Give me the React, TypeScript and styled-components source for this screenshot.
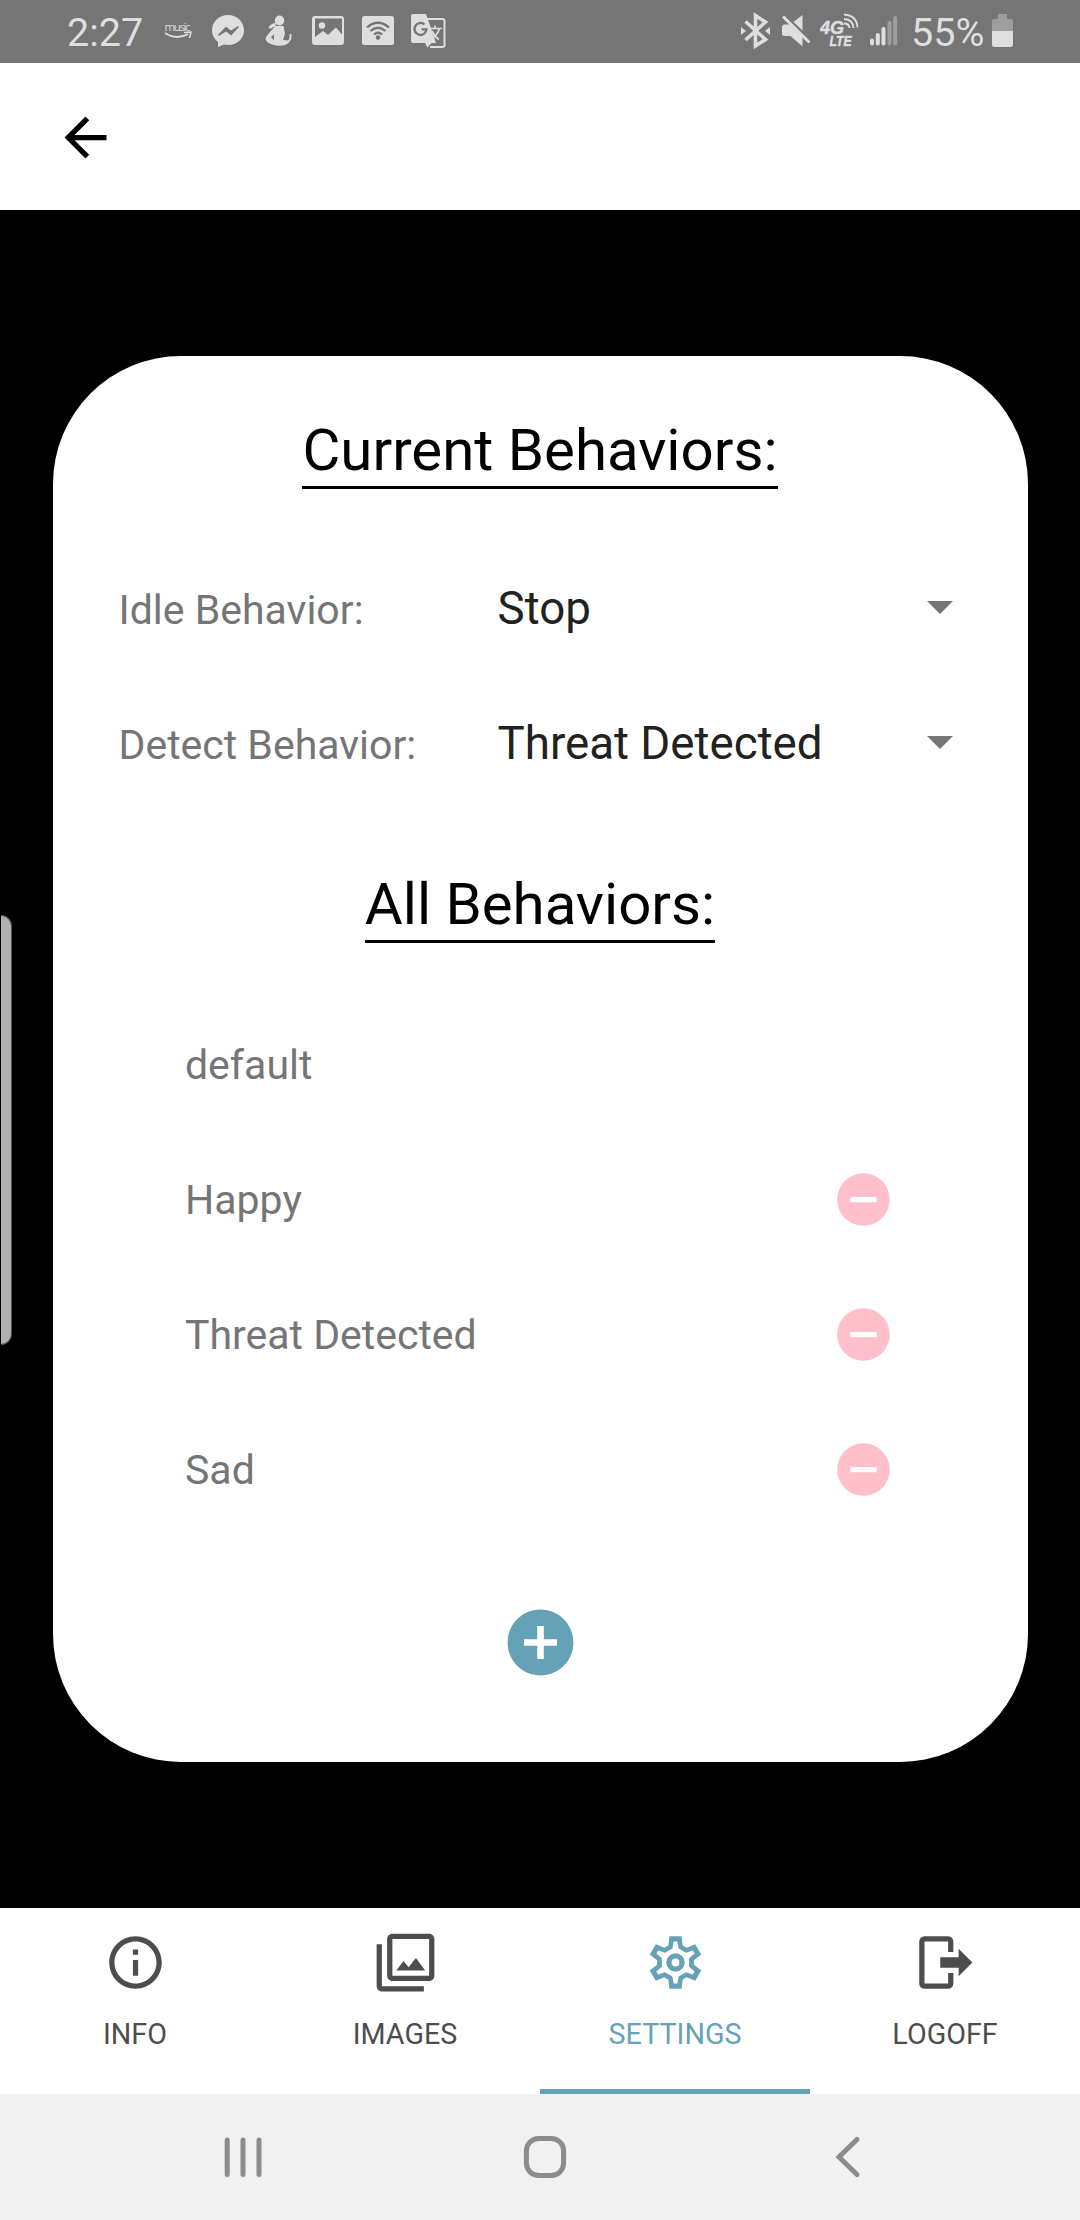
import React from "react";
import styled, { createGlobalStyle } from "styled-components";

const ACCENT = "#66a2b7";
const INK = "#dedede";
const STATUS_BG = "#757575";

const GlobalStyle = createGlobalStyle`
  * { box-sizing: border-box; }
  body { margin: 0; background: #000; font-family: Roboto, "Noto Sans", sans-serif; }
  button { border: 0; padding: 0; background: none; font: inherit; color: inherit; }
  svg { display: block; flex: none; }
`;

const Screen = styled.div`
  position: relative;
  display: flex;
  flex-direction: column;
  width: 1080px;
  height: 2220px;
  overflow: hidden;
`;

const StatusBar = styled.div`
  display: flex;
  justify-content: space-between;
  height: 63px;
  padding: 0 67px 0 67px;
  background: ${STATUS_BG};
  color: ${INK};
`;

const StatusGroup = styled.div`
  display: flex;
  align-items: flex-start;
`;

const StatusText = styled.span<{ $width: number; $inset?: number }>`
  width: ${(p) => p.$width}px;
  padding-left: ${(p) => p.$inset ?? 0}px;
  font-size: 39.5px;
  line-height: 65px;
  white-space: nowrap;
`;

const StatusIcon = styled.svg<{ $gap: number }>`
  height: 63px;
  margin-left: ${(p) => p.$gap}px;
  fill: ${INK};
`;

const Header = styled.header`
  display: flex;
  align-items: center;
  height: 147px;
  padding: 2px 0 0 54px;
  background: #fff;
`;

const Content = styled.main`
  display: flex;
  align-items: center;
  justify-content: center;
  height: 1698px;
  background: #000;
`;

const Card = styled.section`
  display: flex;
  flex-direction: column;
  align-items: center;
  width: 975px;
  height: 1406px;
  padding-top: 58px;
  border-radius: 128px;
  background: #fff;
`;

const Title = styled.h2`
  margin: 0;
  border-bottom: 3px solid #000;
  color: #000;
  font-size: 58.2px;
  font-weight: 400;
  line-height: 72px;
  white-space: nowrap;
`;

const Pickers = styled.div`
  display: flex;
  flex-direction: column;
  width: 100%;
  margin: 53px 0 56px;
  padding: 0 75px 0 66px;
`;

const PickerRow = styled.div`
  display: grid;
  grid-template-columns: 379px 1fr;
  align-items: center;
  height: 135px;
`;

const Label = styled.span`
  padding-top: 1px;
  color: #757575;
  font-size: 41px;
  white-space: nowrap;
`;

const Picker = styled.button`
  display: flex;
  align-items: center;
  justify-content: space-between;
  padding-bottom: 2px;
  color: #212121;
  font-size: 45.7px;
  text-align: left;
`;

const Caret = styled.i`
  margin-bottom: 2px;
  border: 13px solid transparent;
  border-top-color: #757575;
  border-bottom: 0;
`;

const BehaviorList = styled.ul`
  display: flex;
  flex-direction: column;
  width: 100%;
  margin: 54.5px 0 66.5px;
  padding: 0 133px 0 132.5px;
  list-style: none;
`;

const BehaviorRow = styled.li`
  display: flex;
  align-items: center;
  justify-content: space-between;
  height: 134.75px;
`;

const TabBar = styled.nav`
  display: grid;
  grid-template-columns: repeat(4, 1fr);
  height: 186px;
  background: #fff;
`;

const Tab = styled.button<{ $active?: boolean }>`
  display: flex;
  flex-direction: column;
  align-items: center;
  gap: 23px;
  padding-top: 23px;
  border-bottom: 5px solid ${(p) => (p.$active ? ACCENT : "transparent")};
  color: ${(p) => (p.$active ? ACCENT : "#4d4d4d")};
  font-size: 28.7px;
  line-height: 34px;
`;

const SystemNav = styled.footer`
  display: grid;
  grid-template-columns: 224px 300px 311px 1fr;
  align-items: center;
  height: 126px;
  background: #f1f1f1;
`;

const SystemIcon = styled.svg<{ $column: number }>`
  grid-row: 1;
  grid-column: ${(p) => p.$column};
  overflow: visible;
  fill: none;
  stroke: #8c8c8c;
  stroke-width: 5;
  stroke-linecap: round;
`;

const EdgeHandle = styled.div`
  position: absolute;
  left: 1px;
  top: 915px;
  width: 11px;
  height: 430px;
  border: 1px solid #555;
  border-left: 0;
  border-radius: 0 12px 12px 0;
  background: #b0b0b0;
`;

function Glyph({ d, size = 63, color = "currentColor" }: { d: string; size?: number; color?: string }) {
  return (
    <svg width={size} height={size} viewBox="0 0 24 24" fill={color}>
      <path d={d} />
    </svg>
  );
}

const ICONS = {
  back: "M20 11H7.83l5.59-5.59L12 4l-8 8 8 8 1.41-1.41L7.83 13H20z",
  minus: "M12 2C6.48 2 2 6.48 2 12s4.48 10 10 10 10-4.48 10-10S17.52 2 12 2zm5 11H7v-2h10z",
  plus: "M12 2C6.48 2 2 6.48 2 12s4.48 10 10 10 10-4.48 10-10S17.52 2 12 2zm5 11h-4v4h-2v-4H7v-2h4V7h2v4h4z",
  info: "M11 7h2v2h-2zm0 4h2v6h-2zm1-9C6.48 2 2 6.48 2 12s4.48 10 10 10 10-4.48 10-10S17.52 2 12 2zm0 18c-4.41 0-8-3.59-8-8s3.59-8 8-8 8 3.59 8 8-3.59 8-8 8z",
  images:
    "M15.96 10.29l-2.75 3.54-1.96-2.36L8.5 15h11zM3 5H1v16c0 1.1.9 2 2 2h16v-2H3zm18-4H7c-1.1 0-2 .9-2 2v14c0 1.1.9 2 2 2h14c1.1 0 2-.9 2-2V3c0-1.1-.9-2-2-2zm0 16H7V3h14z",
  logoff:
    "M17 17.25V14h-7v-4h7V6.75L22.25 12zM13 2a2 2 0 0 1 2 2v4h-2V4H4v16h9v-4h2v4a2 2 0 0 1-2 2H4a2 2 0 0 1-2-2V4a2 2 0 0 1 2-2z",
};

/* One tooth repeated every 60 degrees */
function toothedRing(tooth: [number, number][]) {
  const points: string[] = [];
  for (let k = 0; k < 6; k++) {
    const a = (k * Math.PI) / 3;
    tooth.forEach(([x, y]) =>
      points.push(
        `${(12 + x * Math.cos(a) - y * Math.sin(a)).toFixed(2)} ${(12 + x * Math.sin(a) + y * Math.cos(a)).toFixed(2)}`
      )
    );
  }
  return `M${points.join("L")}Z`;
}

const GEAR =
  toothedRing([[-2.75, -6.5], [-2.3, -10], [2.3, -10], [2.75, -6.5]]) +
  toothedRing([[-1.2, -5.3], [-0.7, -8], [0.7, -8], [1.2, -5.3]]);

function SettingsIcon() {
  return (
    <svg width="63" height="63" viewBox="0 0 24 24" fill="currentColor">
      <path fillRule="evenodd" d={GEAR} />
      <circle cx="12" cy="12" r="2.5" fill="none" stroke="currentColor" strokeWidth="2" />
    </svg>
  );
}

function NotificationIcons() {
  return (
    <>
      <StatusIcon $gap={19} width="28" viewBox="164 0 28 63">
        <text x="164.5" y="31" fontSize="11.5" fontFamily="Open Sans, sans-serif" textLength="26">music</text>
        <path d="M165 33q12 7.500 23 1" fill="none" stroke={INK} strokeWidth="2" />
        <path d="M184 32.500l7-.5-1.500 6" fill="none" stroke={INK} strokeWidth="1.500" />
      </StatusIcon>
      <StatusIcon $gap={20} width="32" viewBox="212 0 32 63">
        <path d="M228 15c9 0 16 6.600 16 15.300S237 45 228 45l-4-.5-6 2.500v-5c-4-3-6-7-6-11.700C212 21.600 219 15 228 15z" />
        <path d="M219 35l7-7.500 5 4 7-4.500-7 7.500-5-4z" fill={STATUS_BG} stroke={STATUS_BG} strokeWidth="1.500" strokeLinejoin="round" />
      </StatusIcon>
      <StatusIcon $gap={21} width="27" viewBox="265 0 27 63">
        <ellipse cx="279.500" cy="20.500" rx="4.700" ry="5" />
        <path d="M276 23q-5 0-7.500 4.500l2 1.500q3-3 5-2.500z" />
        <path d="M275.500 26h8l1.500 8-2 6 5 .5q2-1 1.500-6.500h1.700q1.500 7-5 10.500-6 2.500-14 0-6-2-6.700-5.500-.2-2.500 10-13zm-4.500 11.500l3 2.500 0-6z" fillRule="evenodd" />
      </StatusIcon>
      <StatusIcon $gap={20} width="32" viewBox="312 0 32 63">
        <path fillRule="evenodd" d="M315 16h26q3 0 3 3v23q0 3-3 3h-26q-3 0-3-3V19q0-3 3-3zm0 2.500V37l8-6 5 4 8-7.500 6 7V18.500z" />
        <circle cx="322" cy="25.500" r="3.200" />
      </StatusIcon>
      <StatusIcon $gap={18} width="32" viewBox="362 0 32 63">
        <rect x="362" y="16" width="32" height="29" rx="2.500" />
        <g fill="none" stroke={STATUS_BG} strokeWidth="2.300">
          <path d="M367 27.500q11-9.500 22 0M370.500 31q7.500-6.500 15 0M374 34.500q4-3.500 8 0" />
        </g>
        <circle cx="378" cy="37.500" r="2.200" fill={STATUS_BG} />
      </StatusIcon>
      <StatusIcon $gap={17} width="35" viewBox="411 0 35 63">
        <path d="M427 19h15.500q2 0 2 2v24q0 2-2 2H430" fill="none" stroke={INK} strokeWidth="2" />
        <path d="M413 14h13l10 29h-4.500l-4 4.500-2.500-4.500h-12q-2 0-2-2V16q0-2 2-2z" />
        <path d="M424.500 24.500a6 6 0 1 0 2 4.800h-5" fill="none" stroke={STATUS_BG} strokeWidth="2.300" />
        <path d="M430 28.500h12M435 25.500v3M439.500 28.500q-2 7-9 11M432 31q3 6 7 8.500" fill="none" stroke={INK} strokeWidth="1.700" />
      </StatusIcon>
    </>
  );
}

function SystemStatus() {
  return (
    <>
      <StatusIcon $gap={0} width="30" viewBox="741 0 30 63">
        <path d="M745.500 21.500l20 18-10 6.500V15.500l10 6.500-20 18" fill="none" stroke={INK} strokeWidth="3.600" />
        <path d="M741 27l5 4-5 4zM770 27l-5 4 5 4z" />
      </StatusIcon>
      <StatusIcon $gap={10} width="30" viewBox="781 0 30 63">
        <path d="M802.500 15v15.500l-9-8.500zM784.500 24.500h5l13 12V46.500L790.500 36h-6q-2.500 0-2.500-2.500V27q0-2.500 2.500-2.500z" />
        <path d="M783 16.500l26.500 26" stroke={INK} strokeWidth="3" />
      </StatusIcon>
      <StatusIcon $gap={9} width="41" viewBox="820 0 41 63">
        <g fontFamily="Liberation Sans, sans-serif" fontWeight="700" fontStyle="italic" stroke={INK} strokeWidth=".5">
          <text x="820" y="34" fontSize="18" textLength="24" lengthAdjust="spacingAndGlyphs">4G</text>
          <text x="829.500" y="46" fontSize="14" textLength="22" lengthAdjust="spacingAndGlyphs">LTE</text>
        </g>
        <path d="M844 14.500q13 1 13.500 13M844 19q9 .5 9.500 9M844 23.500q5 0 5.500 4.500" fill="none" stroke={INK} strokeWidth="1.800" />
      </StatusIcon>
      <StatusIcon $gap={9} width="28" viewBox="870 0 28 63">
        <g strokeWidth="4" strokeLinecap="round" fill="none">
          <path d="M872 40.500v3M877.800 35v8.500M883.500 29v14.500" stroke={INK} />
          <path d="M889.500 23v20.500M895.200 18v25.500" stroke="#9e9e9e" />
        </g>
      </StatusIcon>
    </>
  );
}

function BatteryIcon() {
  return (
    <StatusIcon $gap={6} width="21" viewBox="992 0 21 63">
      <path d="M998 14h9v5h4q2 0 2 2v11h-21V21q0-2 2-2h4z" fill="#9e9e9e" />
      <path d="M992 31h21v13.500q0 2.500-2.500 2.500h-16q-2.500 0-2.500-2.500z" />
    </StatusIcon>
  );
}

const pickers = [
  { label: "Idle Behavior:", value: "Stop" },
  { label: "Detect Behavior:", value: "Threat Detected" },
];

const behaviors = [
  { name: "default", removable: false },
  { name: "Happy", removable: true },
  { name: "Threat Detected", removable: true },
  { name: "Sad", removable: true },
];

export default function App() {
  return (
    <Screen>
      <GlobalStyle />
      <StatusBar>
        <StatusGroup>
          <StatusText $width={78}>2:27</StatusText>
          <NotificationIcons />
        </StatusGroup>
        <StatusGroup>
          <SystemStatus />
          <StatusText $width={88} $inset={13}>55%</StatusText>
          <BatteryIcon />
        </StatusGroup>
      </StatusBar>

      <Header>
        <button aria-label="Back">
          <Glyph d={ICONS.back} />
        </button>
      </Header>

      <Content>
        <Card>
          <Title>Current Behaviors:</Title>
          <Pickers>
            {pickers.map((p) => (
              <PickerRow key={p.label}>
                <Label>{p.label}</Label>
                <Picker>
                  {p.value}
                  <Caret />
                </Picker>
              </PickerRow>
            ))}
          </Pickers>
          <Title>All Behaviors:</Title>
          <BehaviorList>
            {behaviors.map((b) => (
              <BehaviorRow key={b.name}>
                <Label>{b.name}</Label>
                {b.removable && (
                  <button aria-label={`Remove ${b.name}`}>
                    <Glyph d={ICONS.minus} color="#ffc0cb" />
                  </button>
                )}
              </BehaviorRow>
            ))}
          </BehaviorList>
          <button aria-label="Add behavior">
            <Glyph d={ICONS.plus} size={79} color={ACCENT} />
          </button>
        </Card>
      </Content>

      <TabBar>
        <Tab>
          <Glyph d={ICONS.info} />
          INFO
        </Tab>
        <Tab>
          <Glyph d={ICONS.images} />
          IMAGES
        </Tab>
        <Tab $active>
          <SettingsIcon />
          SETTINGS
        </Tab>
        <Tab>
          <Glyph d={ICONS.logoff} />
          LOGOFF
        </Tab>
      </TabBar>

      <SystemNav>
        <SystemIcon $column={2} width="38" height="42" viewBox="0 0 38 42">
          <path d="M3.200 4v34.500M19 4v34.500M35 4v34.500" />
        </SystemIcon>
        <SystemIcon $column={3} width="42" height="42" viewBox="0 0 42 42">
          <rect x="2.400" y="2.400" width="37.200" height="37.200" rx="12.500" />
        </SystemIcon>
        <SystemIcon $column={4} width="24" height="42" viewBox="0 0 24 42">
          <path d="M22 3.500L4 21l18 17.500" />
        </SystemIcon>
      </SystemNav>

      <EdgeHandle />
    </Screen>
  );
}
